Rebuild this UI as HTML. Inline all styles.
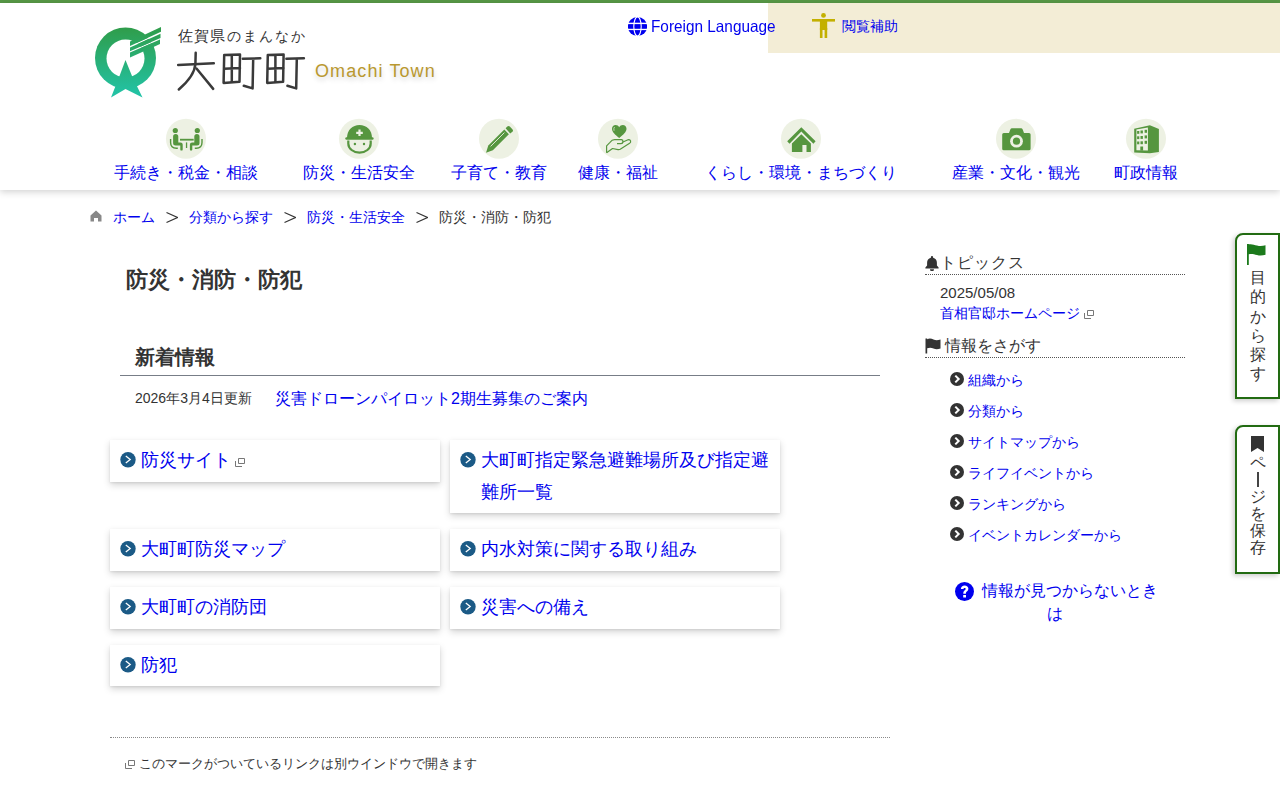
<!DOCTYPE html>
<html lang="ja"><head><meta charset="utf-8"><title>防災・消防・防犯 - 大町町</title>
<style>
*{margin:0;padding:0;box-sizing:border-box}
html,body{width:1280px;height:800px;overflow:hidden;background:#fff}
body{font-family:"Liberation Sans",sans-serif;color:#333;position:relative}
a{color:#0000ee;text-decoration:none}
.abs{position:absolute;white-space:nowrap}
#topbar{position:absolute;left:0;top:0;width:1280px;height:3px;background:#579846}
#header{position:absolute;left:0;top:3px;width:1280px;height:187px;background:#fff;box-shadow:0 2px 7px rgba(0,0,0,.18);z-index:2}
#assist{position:absolute;left:768px;top:3px;z-index:3;width:512px;height:50px;background:#f3edd6}
.navi{position:absolute;top:116px;width:40px;height:40px}
.navt{position:absolute;top:160px;font-size:16px;line-height:24px;color:#0000ee;white-space:nowrap;transform:translateX(-50%)}
.card{position:absolute;width:330px;background:#fff;box-shadow:0 3px 7px rgba(0,0,0,.17),0 1px 2px rgba(0,0,0,.08);padding:5px 10px 5px 31px}
.card a{font-size:18px;line-height:31.5px;color:#0000ee}
.card .ci{position:absolute;left:10px;top:11.5px;width:16px;height:16px}
.side a{color:#0000ee}
.tab{position:absolute;left:1235px;width:45px;border:2px solid #226b12;border-radius:8px 0 0 0;background:#fff;box-shadow:-2px 2px 5px rgba(0,0,0,.2)}
.vt{font-size:16px;color:#333;position:absolute}
</style></head><body>
<div id="topbar"></div>
<div id="header"></div>
<div id="assist"></div>
<!-- logo -->
<svg class="abs" style="left:90px;top:20px;z-index:3" width="80" height="80" viewBox="0 0 80 80">
 <defs><linearGradient id="lg" gradientUnits="userSpaceOnUse" x1="0" y1="8" x2="0" y2="77"><stop offset="0" stop-color="#2f9d4b"/><stop offset="1" stop-color="#22c4a8"/></linearGradient>
 <mask id="mk"><rect width="80" height="80" fill="#fff"/>
 <circle cx="35.5" cy="38.5" r="19" fill="#000"/>
 <polygon points="40,26 72,11.4 72,12.8 40,27.4" fill="#000"/>
 <polygon points="40,31.2 72,17.6 72,19 40,32.6" fill="#000"/>
 </mask></defs>
 <g fill="url(#lg)">
 <circle mask="url(#mk)" cx="35.5" cy="38" r="30.5"/>
 <polygon points="35.5,40 29.5,56 21,77.5 35.5,69 52.5,77.5 42,56"/>
 <polygon points="40,21.5 71,7 71,11.8 40,26"/>
 <polygon points="40,27.4 70.5,13.8 70.5,18 40,31.2"/>
 <polygon points="40,32.6 70,19.6 70,24 64.5,26.5 40,37.5"/>
 </g>
</svg>
<div class="abs" style="left:178px;top:25px;font-size:15px;line-height:22px;letter-spacing:1.2px;color:#333;z-index:3">佐賀県<span style="font-size:14px;letter-spacing:2px">のまんなか</span></div>
<svg class="abs" style="left:0;top:0;z-index:3" width="320" height="100" viewBox="0 0 320 100"><g fill="none" stroke="#3a3a3a" stroke-width="2.5" stroke-linecap="round" stroke-linejoin="round"><path d="M178.2,65 L213.8,63.2"/><path d="M195.7,52.8 L195.4,64 Q194.5,76 178.8,89.5"/><path d="M196.5,68.5 L213.2,88.9"/><path d="M224.2,55 L223.6,82.9 L239.5,81.8 L240,54.5 Z M231.8,55.2 V82.4 M224.2,68.7 L240,68.1"/><path d="M242.8,58.8 L260.3,58.3 M253.2,58.8 L252.6,88.4 L243.8,85.8"/><path d="M267.8,55 L267.2,82.9 L283.1,81.8 L283.6,54.5 Z M275.40000000000003,55.2 V82.4 M267.8,68.7 L283.6,68.1"/><path d="M286.40000000000003,58.8 L303.90000000000003,58.3 M296.8,58.8 L296.2,88.4 L287.40000000000003,85.8"/></g></svg>
<div class="abs" style="left:315px;top:58px;font-size:18px;line-height:26px;letter-spacing:1.1px;color:#b9982f;z-index:3;text-shadow:0 3px 5px rgba(0,0,0,.18)">Omachi Town</div>
<!-- foreign lang -->
<svg class="abs" style="left:628px;top:17px;z-index:3" width="19" height="19" viewBox="0 0 19 19"><defs><mask id="gm"><rect width="19" height="19" fill="#fff"/><rect x="0" y="5.7" width="19" height="1.4" fill="#000"/><rect x="0" y="11.8" width="19" height="1.3" fill="#000"/><ellipse cx="9.5" cy="9.5" rx="3.7" ry="9.6" fill="none" stroke="#000" stroke-width="1.1"/></mask></defs><ellipse cx="9.5" cy="9.5" rx="9.6" ry="9.5" fill="#0000ee" mask="url(#gm)"/></svg>
<a class="abs" style="left:651px;top:15px;font-size:16.5px;line-height:22px;z-index:3;transform:scaleX(0.93);transform-origin:0 0">Foreign Language</a>
<svg class="abs" style="left:812px;top:13px;z-index:3" width="24" height="26" viewBox="0 0 24 26"><g fill="#c3b000">
<circle cx="11.5" cy="2.4" r="2.4"/><rect x="0" y="6" width="23" height="2.6"/><rect x="7.9" y="6" width="7.3" height="11"/><rect x="7.9" y="15" width="2.6" height="10"/><rect x="12.6" y="15" width="2.6" height="10"/>
</g></svg>
<a class="abs" style="left:842px;top:16px;font-size:14px;line-height:20px;z-index:3">閲覧補助</a>
<!-- nav -->
<svg class="navi abs" style="left:164px;top:117px;width:44px;height:44px;z-index:3" width="44" height="44" viewBox="0 0 44 44"><circle cx="22" cy="21.7" r="20" fill="#edf1e3"/><g fill="#56963f"><circle cx="11.3" cy="13.5" r="2.6"/><path d="M9.1,19.5 a2.6,2.6 0 0 1 5.2,0 V25.4 H16.5 a2.2,2.2 0 0 1 2.2,2.2 V32.4 a1.2,1.2 0 0 1 -2.4,0 V28.4 H11.6 a2.5,2.5 0 0 1 -2.5,-2.5 Z"/><path d="M6.6,22 V25.5 Q6.6,31.2 12.5,31.2 H13.8" fill="none" stroke="#56963f" stroke-width="1.4"/><rect x="16" y="21.8" width="13.7" height="1.8"/><rect x="21.9" y="25.4" width="1.3" height="5.6"/><g transform="translate(44.6,0) scale(-1,1)"><circle cx="11.3" cy="13.5" r="2.6"/><path d="M9.1,19.5 a2.6,2.6 0 0 1 5.2,0 V25.4 H16.5 a2.2,2.2 0 0 1 2.2,2.2 V32.4 a1.2,1.2 0 0 1 -2.4,0 V28.4 H11.6 a2.5,2.5 0 0 1 -2.5,-2.5 Z"/><path d="M6.6,22 V25.5 Q6.6,31.2 12.5,31.2 H13.8" fill="none" stroke="#56963f" stroke-width="1.4"/></g></g></svg>
<a class="abs" style="left:186px;top:161px;font-size:16px;line-height:24px;transform:translateX(-50%);z-index:3">手続き・税金・相談</a>
<svg class="navi abs" style="left:337px;top:117px;width:44px;height:44px;z-index:3" width="44" height="44" viewBox="0 0 44 44"><circle cx="22" cy="21.7" r="20" fill="#edf1e3"/><g fill="#56963f"><path d="M10,21 C10,13 15.5,8 22.5,8 C29.5,8 35,13 35,21 Z"/><rect x="8.3" y="20.3" width="28.3" height="2.5" rx="1.2"/><path d="M11.3,23.5 V26.5 a11.2,9.2 0 0 0 22.4,0 V23.5" fill="none" stroke="#56963f" stroke-width="2.2"/><circle cx="17.9" cy="27" r="1.2"/><circle cx="27" cy="27" r="1.2"/><path d="M21.4,12.5 h2.2 v2.2 h2.2 v2.2 h-2.2 v2.2 h-2.2 v-2.2 h-2.2 v-2.2 h2.2 Z" fill="#edf1e3"/></g></svg>
<a class="abs" style="left:359px;top:161px;font-size:16px;line-height:24px;transform:translateX(-50%);z-index:3">防災・生活安全</a>
<svg class="navi abs" style="left:477px;top:117px;width:44px;height:44px;z-index:3" width="44" height="44" viewBox="0 0 44 44"><circle cx="22" cy="21.7" r="20" fill="#edf1e3"/><g fill="#56963f"><path d="M9,35.8 L11.3,28.6 L27.3,12.6 L31.9,17.2 L15.9,33.2 Z"/><path d="M28.6,11.3 L30.3,9.6 a1.8,1.8 0 0 1 2.5,0 L35.4,12.2 a1.8,1.8 0 0 1 0,2.5 L33.2,16.4 Z"/><path d="M13.6,29.4 L27.4,15.6" stroke="#edf1e3" stroke-width="0.9"/></g></svg>
<a class="abs" style="left:499px;top:161px;font-size:16px;line-height:24px;transform:translateX(-50%);z-index:3">子育て・教育</a>
<svg class="navi abs" style="left:596px;top:117px;width:44px;height:44px;z-index:3" width="44" height="44" viewBox="0 0 44 44"><circle cx="22" cy="21.7" r="20" fill="#edf1e3"/><g fill="#56963f"><path d="M23.2,20.9 C19,17.5 16,15 16,11.7 C16,9.5 17.6,8 19.6,8 C21.2,8 22.4,8.9 23.2,10.2 C24,8.9 25.2,8 26.8,8 C28.8,8 30.5,9.5 30.5,11.7 C30.5,15 27.4,17.5 23.2,20.9 Z"/><path d="M10.6,35.8 V28.8 L14,25.3 Q16,22.6 18.5,22.6 H25.5 Q27.2,22.8 27,24.6 Q26.8,26.6 25,26.6 H21" fill="none" stroke="#56963f" stroke-width="1.2" stroke-linejoin="round"/><path d="M26.5,25.3 L32,22.8 Q34,22.3 34.6,24 Q35,25.5 33.6,26.3 L24.2,32.3 Q23.2,32.9 22,32.6 L16.5,31.5 L10.6,35.8" fill="none" stroke="#56963f" stroke-width="1.2" stroke-linejoin="round"/><path d="M18.5,10 Q17.5,11 18,13.8" stroke="#edf1e3" stroke-width="0.7" fill="none"/></g></svg>
<a class="abs" style="left:618px;top:161px;font-size:16px;line-height:24px;transform:translateX(-50%);z-index:3">健康・福祉</a>
<svg class="navi abs" style="left:779px;top:117px;width:44px;height:44px;z-index:3" width="44" height="44" viewBox="0 0 44 44"><circle cx="22" cy="21.7" r="20" fill="#edf1e3"/><g fill="#56963f"><path d="M8.2,24.2 L22.3,10.2 L36.6,24.2 L34.4,26.7 L22.3,14.6 L10.5,26.7 Z"/><path d="M12.9,26.4 L22.3,17.3 L31.9,26.4 V34.9 H27.5 V28 H23.4 V34.9 H12.9 Z"/></g></svg>
<a class="abs" style="left:801px;top:161px;font-size:16px;line-height:24px;transform:translateX(-50%);z-index:3">くらし・環境・まちづくり</a>
<svg class="navi abs" style="left:994px;top:117px;width:44px;height:44px;z-index:3" width="44" height="44" viewBox="0 0 44 44"><circle cx="22" cy="21.7" r="20" fill="#edf1e3"/><g fill="#56963f"><path d="M9.8,16 H15 L16.3,12.5 Q16.8,11.3 18,11.3 H27 Q28.2,11.3 28.7,12.5 L30,16 H35 Q36.6,16 36.6,17.6 V31.7 Q36.6,33.3 35,33.3 H9.8 Q8.2,33.3 8.2,31.7 V17.6 Q8.2,16 9.8,16 Z"/><circle cx="22.5" cy="24.2" r="6.4" fill="#edf1e3"/><circle cx="22.5" cy="24.2" r="3.6"/></g></svg>
<a class="abs" style="left:1016px;top:161px;font-size:16px;line-height:24px;transform:translateX(-50%);z-index:3">産業・文化・観光</a>
<svg class="navi abs" style="left:1124px;top:117px;width:44px;height:44px;z-index:3" width="44" height="44" viewBox="0 0 44 44"><circle cx="22" cy="21.7" r="20" fill="#edf1e3"/><g fill="#56963f"><path d="M10.2,11.8 L25.9,8.2 L34.9,12.1 V34.9 L25.9,36.3 L10.2,35.5 Z"/><path d="M12.4,12.6 L23.9,10.4 V33.5 L12.4,33.2 Z" fill="#edf1e3"/><rect x="13.1" y="14" width="2.2" height="2.8"/><rect x="16.5" y="13.5" width="2.4" height="2.9"/><rect x="20.6" y="12.8" width="2.4" height="3"/><rect x="13.1" y="19.3" width="2.2" height="2.8"/><rect x="16.5" y="19" width="2.4" height="2.9"/><rect x="20.6" y="18.4" width="2.4" height="3"/><rect x="13.1" y="24.5" width="2.2" height="2.8"/><rect x="16.5" y="24.3" width="2.4" height="2.9"/><rect x="20.6" y="23.8" width="2.4" height="3"/><rect x="16.3" y="29.5" width="2.8" height="4.1"/></g></svg>
<a class="abs" style="left:1146px;top:161px;font-size:16px;line-height:24px;transform:translateX(-50%);z-index:3">町政情報</a>

<!-- breadcrumb -->
<svg class="abs" style="left:90px;top:210px" width="12" height="12" viewBox="0 0 12 12"><path d="M6,0.5 L11.5,5.5 V11.5 H8 V8 H4 V11.5 H0.5 V5.5 Z" fill="#888"/></svg>
<a class="abs" style="left:113px;top:206px;font-size:14px;line-height:22px">ホーム</a>
<svg class="abs" style="left:166px;top:212px" width="12" height="11" viewBox="0 0 12 11"><path d="M0.5,0.5 L11.5,5.5 L0.5,10.5" fill="none" stroke="#333" stroke-width="1.1"/></svg>
<a class="abs" style="left:189px;top:206px;font-size:14px;line-height:22px">分類から探す</a>
<svg class="abs" style="left:284px;top:212px" width="12" height="11" viewBox="0 0 12 11"><path d="M0.5,0.5 L11.5,5.5 L0.5,10.5" fill="none" stroke="#333" stroke-width="1.1"/></svg>
<a class="abs" style="left:307px;top:206px;font-size:14px;line-height:22px">防災・生活安全</a>
<svg class="abs" style="left:416px;top:212px" width="12" height="11" viewBox="0 0 12 11"><path d="M0.5,0.5 L11.5,5.5 L0.5,10.5" fill="none" stroke="#333" stroke-width="1.1"/></svg>
<span class="abs" style="left:439px;top:206px;font-size:14px;line-height:22px;color:#333">防災・消防・防犯</span>
<!-- title -->
<h1 class="abs" style="left:126px;top:264px;font-size:22px;line-height:32px;font-weight:bold;color:#333">防災・消防・防犯</h1>
<h2 class="abs" style="left:135px;top:343px;font-size:19.5px;line-height:28px;font-weight:bold;color:#333">新着情報</h2>
<div class="abs" style="left:120px;top:375px;width:760px;height:1px;background:#777d87"></div>
<span class="abs" style="left:135px;top:387px;font-size:14px;line-height:22px;color:#333">2026年3月4日更新</span>
<a class="abs" style="left:275px;top:387px;font-size:16px;line-height:24px">災害ドローンパイロット2期生募集のご案内</a>
<!-- cards -->
<div class="card" style="left:110px;top:440px;height:42px"><svg class="ci" width="16" height="16" viewBox="0 0 16 16"><circle cx="8" cy="7.8" r="7.7" fill="#1b5a86"/><path d="M5.8,4 L10.2,7.5 L5.8,11" fill="none" stroke="#fff" stroke-width="1.3"/></svg><a>防災サイト</a> <svg width="10" height="9" viewBox="0 0 10 9" style="vertical-align:-1px"><path d="M3.5,0.5 H9.5 V5.5 H3.5 Z M0.5,3 V8.5 H7" fill="none" stroke="#777" stroke-width="1"/></svg></div>
<div class="card" style="left:450px;top:440px;height:73px"><svg class="ci" width="16" height="16" viewBox="0 0 16 16"><circle cx="8" cy="7.8" r="7.7" fill="#1b5a86"/><path d="M5.8,4 L10.2,7.5 L5.8,11" fill="none" stroke="#fff" stroke-width="1.3"/></svg><a>大町町指定緊急避難場所及び指定避<br>難所一覧</a></div>
<div class="card" style="left:110px;top:529px;height:42px"><svg class="ci" width="16" height="16" viewBox="0 0 16 16"><circle cx="8" cy="7.8" r="7.7" fill="#1b5a86"/><path d="M5.8,4 L10.2,7.5 L5.8,11" fill="none" stroke="#fff" stroke-width="1.3"/></svg><a>大町町防災マップ</a></div>
<div class="card" style="left:450px;top:529px;height:42px"><svg class="ci" width="16" height="16" viewBox="0 0 16 16"><circle cx="8" cy="7.8" r="7.7" fill="#1b5a86"/><path d="M5.8,4 L10.2,7.5 L5.8,11" fill="none" stroke="#fff" stroke-width="1.3"/></svg><a>内水対策に関する取り組み</a></div>
<div class="card" style="left:110px;top:587px;height:42px"><svg class="ci" width="16" height="16" viewBox="0 0 16 16"><circle cx="8" cy="7.8" r="7.7" fill="#1b5a86"/><path d="M5.8,4 L10.2,7.5 L5.8,11" fill="none" stroke="#fff" stroke-width="1.3"/></svg><a>大町町の消防団</a></div>
<div class="card" style="left:450px;top:587px;height:42px"><svg class="ci" width="16" height="16" viewBox="0 0 16 16"><circle cx="8" cy="7.8" r="7.7" fill="#1b5a86"/><path d="M5.8,4 L10.2,7.5 L5.8,11" fill="none" stroke="#fff" stroke-width="1.3"/></svg><a>災害への備え</a></div>
<div class="card" style="left:110px;top:645px;height:41px"><svg class="ci" width="16" height="16" viewBox="0 0 16 16"><circle cx="8" cy="7.8" r="7.7" fill="#1b5a86"/><path d="M5.8,4 L10.2,7.5 L5.8,11" fill="none" stroke="#fff" stroke-width="1.3"/></svg><a>防犯</a></div>
<div class="abs" style="left:110px;top:737px;width:780px;border-top:1px dotted #8a8a8a"></div>
<svg class="abs" style="left:125px;top:760px" width="10" height="9" viewBox="0 0 10 9"><path d="M3.5,0.5 H9.5 V5.5 H3.5 Z M0.5,3 V8.5 H7" fill="none" stroke="#777" stroke-width="1"/></svg>
<span class="abs" style="left:139px;top:753px;font-size:13px;line-height:22px;color:#333">このマークがついているリンクは別ウインドウで開きます</span>

<!-- sidebar -->
<svg class="abs" style="left:925px;top:256px" width="14" height="15" viewBox="0 0 14 15"><path d="M7,0 a1.1,1.1 0 0 1 1.1,1.1 V1.7 C10.6,2.2 11.9,4.3 11.9,6.8 V9.6 L13.6,11.6 V12.4 H0.4 V11.6 L2.1,9.6 V6.8 C2.1,4.3 3.4,2.2 5.9,1.7 V1.1 A1.1,1.1 0 0 1 7,0 Z M5,13.2 H9 A2,2 0 0 1 5,13.2 Z" fill="#333"/></svg>
<span class="abs" style="left:940px;top:251px;font-size:16px;line-height:24px;letter-spacing:1px;color:#333">トピックス</span>
<div class="abs" style="left:925px;top:274px;width:260px;border-top:1px dotted #555"></div>
<span class="abs" style="left:940px;top:283px;font-size:15px;line-height:20px;color:#333">2025/05/08</span>
<a class="abs" style="left:940px;top:302px;font-size:14px;line-height:22px">首相官邸ホームページ</a>
<svg class="abs" style="left:1084px;top:310px" width="10" height="9" viewBox="0 0 10 9"><path d="M3.5,0.5 H9.5 V5.5 H3.5 Z M0.5,3 V8.5 H7" fill="none" stroke="#777" stroke-width="1"/></svg>
<svg class="abs" style="left:925px;top:338px" width="16" height="16" viewBox="0 0 16 16"><path d="M0.5,0.5 H2.2 V15.5 H0.5 Z M2.2,1.2 C4.5,0.2 6.5,0.6 8.5,1.6 C10.5,2.6 12.7,2.6 15.5,1.6 V10.5 C12.7,11.5 10.5,11.5 8.5,10.5 C6.5,9.5 4.5,9.3 2.2,10.2 Z" fill="#333"/></svg>
<span class="abs" style="left:945px;top:334px;font-size:16px;line-height:24px;color:#333">情報をさがす</span>
<div class="abs" style="left:925px;top:357px;width:260px;border-top:1px dotted #555"></div>
<svg class="abs" style="left:950px;top:372px" width="14" height="14" viewBox="0 0 14 14"><circle cx="7" cy="7" r="7" fill="#333"/><path d="M5.3,3.6 L8.7,7 L5.3,10.4" fill="none" stroke="#fff" stroke-width="2"/></svg>
<a class="abs" style="left:968px;top:369px;font-size:14px;line-height:22px">組織から</a>
<svg class="abs" style="left:950px;top:403px" width="14" height="14" viewBox="0 0 14 14"><circle cx="7" cy="7" r="7" fill="#333"/><path d="M5.3,3.6 L8.7,7 L5.3,10.4" fill="none" stroke="#fff" stroke-width="2"/></svg>
<a class="abs" style="left:968px;top:400px;font-size:14px;line-height:22px">分類から</a>
<svg class="abs" style="left:950px;top:434px" width="14" height="14" viewBox="0 0 14 14"><circle cx="7" cy="7" r="7" fill="#333"/><path d="M5.3,3.6 L8.7,7 L5.3,10.4" fill="none" stroke="#fff" stroke-width="2"/></svg>
<a class="abs" style="left:968px;top:431px;font-size:14px;line-height:22px">サイトマップから</a>
<svg class="abs" style="left:950px;top:465px" width="14" height="14" viewBox="0 0 14 14"><circle cx="7" cy="7" r="7" fill="#333"/><path d="M5.3,3.6 L8.7,7 L5.3,10.4" fill="none" stroke="#fff" stroke-width="2"/></svg>
<a class="abs" style="left:968px;top:462px;font-size:14px;line-height:22px">ライフイベントから</a>
<svg class="abs" style="left:950px;top:496px" width="14" height="14" viewBox="0 0 14 14"><circle cx="7" cy="7" r="7" fill="#333"/><path d="M5.3,3.6 L8.7,7 L5.3,10.4" fill="none" stroke="#fff" stroke-width="2"/></svg>
<a class="abs" style="left:968px;top:493px;font-size:14px;line-height:22px">ランキングから</a>
<svg class="abs" style="left:950px;top:527px" width="14" height="14" viewBox="0 0 14 14"><circle cx="7" cy="7" r="7" fill="#333"/><path d="M5.3,3.6 L8.7,7 L5.3,10.4" fill="none" stroke="#fff" stroke-width="2"/></svg>
<a class="abs" style="left:968px;top:524px;font-size:14px;line-height:22px">イベントカレンダーから</a>
<svg class="abs" style="left:955px;top:582px" width="19" height="19" viewBox="0 0 19 19"><circle cx="9.5" cy="9.5" r="9.5" fill="#0000ee"/><path d="M5.9,7 C5.9,4.8 7.6,3.4 9.6,3.4 C11.8,3.4 13.4,4.8 13.4,6.8 C13.4,9.1 10.9,9.4 10.9,11.1 V11.7 H8.3 V10.8 C8.3,8.4 10.7,8.1 10.7,6.9 C10.7,6.3 10.2,5.9 9.6,5.9 C8.9,5.9 8.5,6.4 8.5,7 Z M8.2,12.9 H11 V15.5 H8.2 Z" fill="#fff"/></svg>
<a class="abs" style="left:982px;top:579px;font-size:16px;line-height:24px">情報が見つからないとき</a>
<a class="abs" style="left:1047px;top:602px;font-size:16px;line-height:24px">は</a>
<!-- tabs -->
<div class="tab" style="top:233px;height:166px"></div>
<svg class="abs" style="left:1247px;top:244px" width="19" height="21" viewBox="0 0 19 21"><path d="M0,0 H1.8 V21 H0 Z M1.8,0.3 C5,-0.3 7,0.8 10,1.6 C13,2.4 15.5,2.2 18.5,1.3 V10.8 C15.5,11.7 13,11.9 10,11.1 C7,10.3 5,9.5 1.8,10.2 Z" fill="#1c7a1c"/></svg>
<div class="vt" style="left:1250px;top:268px;width:16px;font-size:16px;line-height:19.3px;text-align:center;white-space:normal">目<br>的<br>か<br>ら<br>探<br>す</div>
<div class="tab" style="top:425px;height:149px"></div>
<svg class="abs" style="left:1251px;top:436px" width="13" height="16" viewBox="0 0 13 16"><path d="M0,0 H13 V16 L6.5,12 L0,16 Z" fill="#333"/></svg>
<div class="vt" style="left:1250px;top:454px;width:16px;font-size:16px;line-height:17px;text-align:center;white-space:normal">ペ<br><span style="display:inline-block;width:1.2px;height:15px;background:#444;vertical-align:-2px"></span><br>ジ<br>を<br>保<br>存</div>


</body></html>
